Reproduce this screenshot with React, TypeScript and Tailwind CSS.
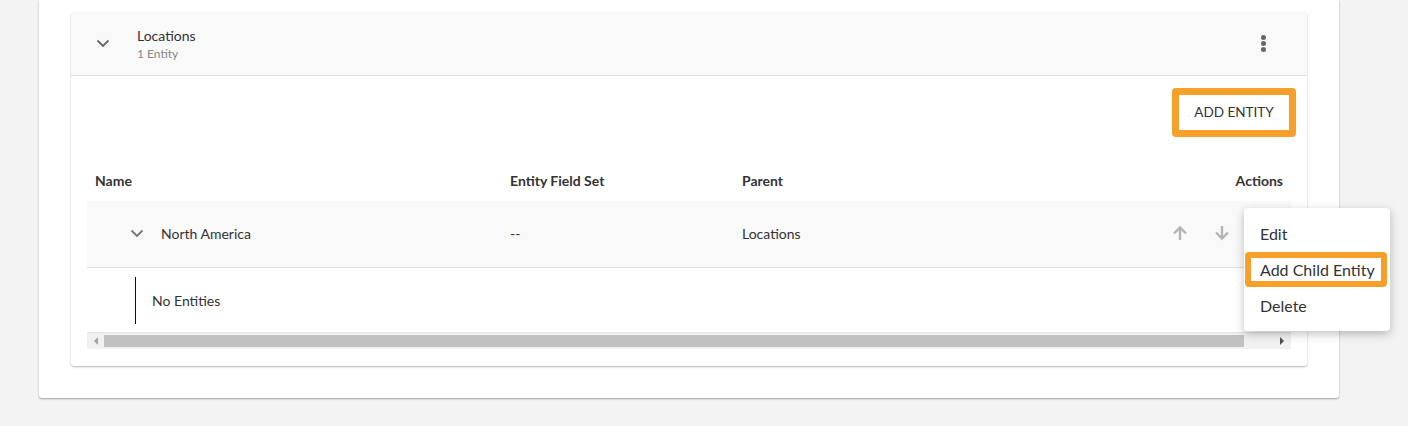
import React from "react";

const Chevron = ({ className = "" }: { className?: string }) => (
  <svg width="14" height="9" viewBox="0 0 14 9" className={className}>
    <path d="M1.5 1.5 L7 7 L12.5 1.5" fill="none" stroke="currentColor" strokeWidth="1.8" />
  </svg>
);

const ArrowUp = () => (
  <svg width="16" height="16" viewBox="0 0 16 16">
    <path d="M8 15 V2.5 M2 8.5 L8 2.5 L14 8.5" fill="none" stroke="#b5b5b5" strokeWidth="2.4" />
  </svg>
);
const ArrowDown = () => (
  <svg width="16" height="16" viewBox="0 0 16 16">
    <path d="M8 1 V13.5 M2 7.5 L8 13.5 L14 7.5" fill="none" stroke="#b5b5b5" strokeWidth="2.4" />
  </svg>
);

export default function App() {
  return (
    <div
      className="w-[1408px] h-[426px] bg-[#f3f3f3] pl-[39px] text-[#333]"
      style={{ fontFamily: "Lato, 'Open Sans', sans-serif" }}
    >
      <div className="w-[1300px] bg-white rounded-b-[3px] shadow-[0_1px_2px_rgba(0,0,0,0.35)] px-[32px] pt-[12px] pb-[32px]">
        <div className="relative bg-white rounded-[3px] shadow-[0_1px_2px_rgba(0,0,0,0.3)]">
          {/* Header */}
          <div className="h-[64px] bg-[#f9f9f9] border-b border-[#e0e0e0] flex items-center pl-[25px] pr-[41px]">
            <Chevron className="text-[#666]" />
            <div className="ml-[27px] flex flex-col">
              <span className="text-[14px] leading-[18px] text-[#333]">Locations</span>
              <span className="text-[12px] leading-[15px] text-[#888] mt-[1px]">1 Entity</span>
            </div>
            <div className="ml-auto flex flex-col gap-[1px] items-center">
              <span className="w-[5px] h-[5px] rounded-full bg-[#666]" />
              <span className="w-[5px] h-[5px] rounded-full bg-[#666]" />
              <span className="w-[5px] h-[5px] rounded-full bg-[#666]" />
            </div>
          </div>

          {/* Body */}
          <div className="px-[16px] pb-[17px]">
            <div className="flex justify-end pt-[12px] mr-[-5px]">
              <div className="w-[124px] h-[49px] border-[7px] border-[#f79f2b] rounded-[4px] bg-white flex items-center justify-center">
                <span className="text-[13.5px] text-[#333]">ADD ENTITY</span>
              </div>
            </div>

            <div className="mt-[24px]">
              {/* Table header */}
              <div className="h-[40px] flex items-center text-[14px] font-bold text-[#333] pb-[2px]">
                <div className="w-[415px] pl-[8px]">Name</div>
                <div className="w-[232px] pl-[8px]">Entity Field Set</div>
                <div className="flex-1 pl-[8px]">Parent</div>
                <div className="pr-[8px]">Actions</div>
              </div>
              {/* Row */}
              <div className="h-[67px] bg-[#f9f9f9] border-b border-[#e0e0e0] flex items-center text-[14px] pb-[2px]">
                <div className="w-[415px] flex items-center pl-[43px]">
                  <Chevron className="text-[#777]" />
                  <span className="ml-[17px]">North America</span>
                </div>
                <div className="w-[232px] pl-[8px]">--</div>
                <div className="flex-1 pl-[8px]">Locations</div>
                <div className="flex items-center gap-[26px] mr-[61px]">
                  <ArrowUp />
                  <ArrowDown />
                </div>
              </div>
              {/* Child row */}
              <div className="h-[64px] flex items-center">
                <div className="ml-[48px] h-[47px] border-l border-[#111]" />
                <span className="ml-[16px] text-[14px]">No Entities</span>
              </div>
              {/* Scrollbar */}
              <div className="h-[17px] bg-[#f1f1f1] border-t border-[#e3e3e3] flex items-center">
                <div className="w-[17px] flex justify-center">
                  <div className="w-0 h-0 border-y-[4px] border-y-transparent border-r-[4px] border-r-[#a3a3a3]" />
                </div>
                <div className="w-[1140px] h-[12px] bg-[#c1c1c1]" />
                <div className="flex-1 flex justify-end pr-[7px]">
                  <div className="w-0 h-0 border-y-[4px] border-y-transparent border-l-[4px] border-l-[#505050]" />
                </div>
              </div>
            </div>
          </div>

          {/* Menu */}
          <div className="absolute left-[1173px] top-[196px] w-[146px] h-[123px] bg-white rounded-[4px] shadow-[0_3px_10px_rgba(0,0,0,0.25)] flex flex-col py-[8px] text-[16px] text-[#333]">
            <div className="h-[36px] flex items-center pl-[16px]">Edit</div>
            <div className="ml-[1px] mr-[3px] h-[35px] border-[6px] border-[#f79f2b] rounded-[4px] flex items-center pl-[9px]">
              Add Child Entity
            </div>
            <div className="h-[36px] flex items-center pl-[16px] pt-[1px]">Delete</div>
          </div>
        </div>
      </div>
    </div>
  );
}
